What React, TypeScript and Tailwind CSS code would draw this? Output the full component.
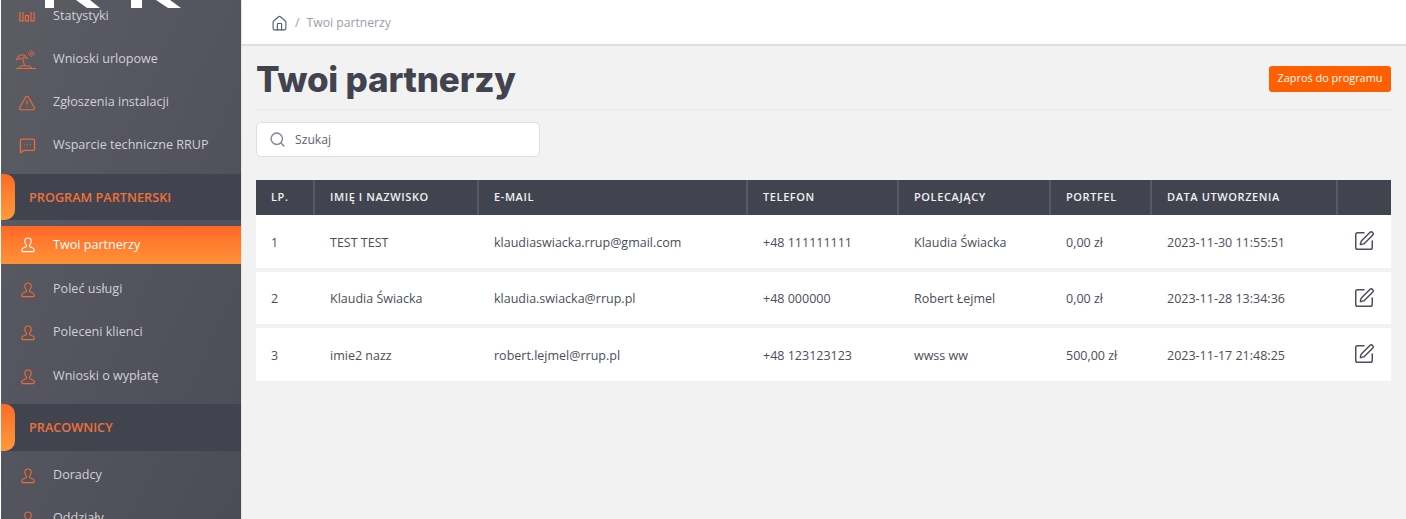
import React from "react";
import { House, Search, SquarePen, TriangleAlert, MessageSquareMore } from "lucide-react";

const font = "font-['Open_Sans','Liberation_Sans',sans-serif]";

// outline person used for most of the menu
function PersonIcon({ className }: { className?: string }) {
  return (
    <svg viewBox="0 0 16 18" fill="none" stroke="currentColor" strokeWidth="1.3" className={className}>
      <path d="M8 1c-2.4 0-3.7 1.7-3.7 3.8 0 1.7.8 3.2 1.7 4.1.3.4.3 1.4-.1 1.9-.7.8-4.4 1.2-4.9 3.2-.2.9 0 2.5 1 2.5h12c1 0 1.2-1.6 1-2.5-.5-2-4.2-2.4-4.9-3.2-.4-.5-.4-1.5-.1-1.9.9-.9 1.7-2.4 1.7-4.1C11.7 2.7 10.4 1 8 1z" />
    </svg>
  );
}

function BeachIcon({ className }: { className?: string }) {
  return (
    <svg viewBox="0 0 22 20" fill="none" stroke="currentColor" strokeWidth="1" className={className}>
      <path d="M1.500 10.500C2 7 5 4.500 8.500 5.500c2 .6 3.500 2 4 3.500-2-.8-3.500-.8-5-.2-2 .3-4.500.8-6 1.700z" />
      <path d="M5 5.500c-.8 1-1.300 2.800-1.300 4M9 5.800c.2 1 0 2-.6 3" strokeWidth="0.8" />
      <path d="M7.500 9l2.200 7.500M1 19h20M3.500 18.500c.5-1.500 3-2.300 6-2.300s6.500.8 7.500 2.300" />
      <circle cx="16.500" cy="4" r="1.300" />
      <path d="M16.500 .5v1.200M16.500 6.300v1.200M20 4h-1.200M14 4h-1.200M19 1.500l-.9.9M14.900 5.600l-.9.9M19 6.500l-.9-.9M14.900 2.400l-.9-.9" strokeWidth="0.8" />
    </svg>
  );
}

function BarsIcon({ className }: { className?: string }) {
  return (
    <svg viewBox="0 0 18 12" fill="none" stroke="currentColor" strokeWidth="1.3" className={className}>
      <path d="M1 1v10h3.500V1M7.200 5v6h3.500V5zM13.500 1v10H17V1" />
    </svg>
  );
}

function MenuItem({ icon, label, active }: { icon: React.ReactNode; label: string; active?: boolean }) {
  return (
    <div
      className={`flex items-center pl-[14px] text-[12.6px] ${
        active
          ? "h-[38px] bg-gradient-to-b from-[#ff6726] to-[#ff9238] text-white"
          : "h-[43px] text-[#d0d1d5]"
      }`}
    >
      <div className={`flex w-[38px] justify-start ${active ? "text-white" : "text-[#ee6c33]"}`}>{icon}</div>
      <span>{label}</span>
    </div>
  );
}

function SectionHeader({ label, className }: { label: string; className?: string }) {
  return (
    <div className={`relative flex items-center bg-[#41444f] pl-7 text-[12.7px] font-semibold text-[#f0703a] ${className ?? ""}`}>
      <div className="absolute top-0 left-0 h-full w-[14px] rounded-r-[10px] bg-gradient-to-b from-[#ff6a26] to-[#ff9a3c]" />
      {label}
    </div>
  );
}

const person = <PersonIcon className="ml-[6px] h-[16px] w-[14px]" />;

function Sidebar() {
  return (
    <aside className="h-[519px] w-[242px] shrink-0 overflow-hidden border-r border-l border-r-[#e4e4e4] border-l-white bg-gradient-to-br from-[#5c5c65] to-[#4b4c56]">
      {/* scrolled logo, only its bottom edge shows */}
      <svg viewBox="0 0 240 8" className="block h-[8px] w-[240px]">
        <path d="M44 0h9v8h-9zM75 0h14l10 8h-13zM130 0h11v8h-11zM155 0h14l11 8h-13z" fill="#fff" />
      </svg>
      <div className="-mt-[13px]">
        <MenuItem icon={<BarsIcon className="ml-[4px] h-[13px] w-[16px]" />} label="Statystyki" />
        <MenuItem icon={<BeachIcon className="h-[21px] w-[22px]" />} label="Wnioski urlopowe" />
        <MenuItem icon={<TriangleAlert className="ml-[3px] h-[18px] w-[18px]" strokeWidth={1.6} />} label="Zgłoszenia instalacji" />
        <MenuItem icon={<MessageSquareMore className="ml-[4px] h-[17px] w-[17px]" strokeWidth={1.8} />} label="Wsparcie techniczne RRUP" />
      </div>
      <SectionHeader label="PROGRAM PARTNERSKI" className="mt-[7px] h-[46px] pt-[1px]" />
      <div className="mt-[6px]">
        <MenuItem active icon={person} label="Twoi partnerzy" />
      </div>
      <div className="mt-[4px]">
        <MenuItem icon={person} label="Poleć usługi" />
        <MenuItem icon={person} label="Poleceni klienci" />
        <div className="mt-[1px]">
          <MenuItem icon={person} label="Wnioski o wypłatę" />
        </div>
      </div>
      <SectionHeader label="PRACOWNICY" className="mt-[6px] h-[47px]" />
      <div className="mt-[3px]">
        <MenuItem icon={person} label="Doradcy" />
        <MenuItem icon={person} label="Oddziały" />
      </div>
    </aside>
  );
}

const cols = "grid grid-cols-[59px_164px_269px_151px_152px_101px_186px_53px]";
const headers = ["LP.", "IMIĘ I NAZWISKO", "E-MAIL", "TELEFON", "POLECAJĄCY", "PORTFEL", "DATA UTWORZENIA", ""];

const rows = [
  ["1", "TEST TEST", "klaudiaswiacka.rrup@gmail.com", "+48 111111111", "Klaudia Świacka", "0,00 zł", "2023-11-30 11:55:51"],
  ["2", "Klaudia Świacka", "klaudia.swiacka@rrup.pl", "+48 000000", "Robert Łejmel", "0,00 zł", "2023-11-28 13:34:36"],
  ["3", "imie2 nazz", "robert.lejmel@rrup.pl", "+48 123123123", "wwss ww", "500,00 zł", "2023-11-17 21:48:25"],
];

export default function App() {
  return (
    <div className={`flex h-[519px] w-[1406px] overflow-hidden bg-[#f2f2f2] ${font}`}>
      <Sidebar />
      <main className="min-w-0 flex-1">
        {/* breadcrumb */}
        <div className="flex h-[46px] items-center gap-[7px] border-b-2 border-[#dfdfdf] bg-white pt-[2px] pl-[29px] text-[12.2px] text-[#98a0ac]">
          <House className="h-[17px] w-[17px] text-[#565d6b]" strokeWidth={1.6} />
          <span>/</span>
          <span>Twoi partnerzy</span>
        </div>

        <div className="pr-[15px] pl-[14px]">
          <div className="flex h-[64px] items-center justify-between border-b border-[#ebebeb]">
            <h1 className="mt-[3px] font-['Inter',sans-serif] text-[35px] leading-none font-extrabold tracking-[-0.2px] text-[#41444f]">
              Twoi partnerzy
            </h1>
            <button className="mt-[2px] h-[26px] w-[122px] rounded-[3px] bg-[#ff5f00] text-[10.9px] text-white">
              Zaproś do programu
            </button>
          </div>

          <div className="mt-[12px] flex h-[35px] w-[284px] items-center gap-[9px] rounded-[5px] border border-[#dedfe3] bg-white pl-[12px] text-[12.2px] text-[#5c6270]">
            <Search className="h-[17px] w-[17px] text-[#868d9a]" strokeWidth={2.2} />
            <span className="pt-[2px]">Szukaj</span>
          </div>

          <div className="mt-[23px]">
            <div className={`${cols} h-[35px] bg-[#41444f] text-[11px] font-semibold tracking-[0.6px] text-[#f0f0f2]`}>
              {headers.map((h, i) => (
                <div key={i} className={`flex items-center pl-[15px] ${i < 7 ? "border-r-2 border-[#555965]" : ""}`}>
                  {h}
                </div>
              ))}
            </div>
            <div className="flex flex-col gap-[4px]">
              {rows.map((row) => (
                <div key={row[0]} className={`${cols} h-[52.5px] bg-white text-[12.5px] text-[#4a4e5a]`}>
                  {row.map((cell, i) => (
                    <div key={i} className="flex items-center pt-[4px] pl-[15px]">
                      {cell}
                    </div>
                  ))}
                  <div className="flex items-center pl-[15px]">
                    <SquarePen className="h-[22px] w-[22px] text-[#4a4e5a]" strokeWidth={1.6} />
                  </div>
                </div>
              ))}
            </div>
          </div>
        </div>
      </main>
    </div>
  );
}
